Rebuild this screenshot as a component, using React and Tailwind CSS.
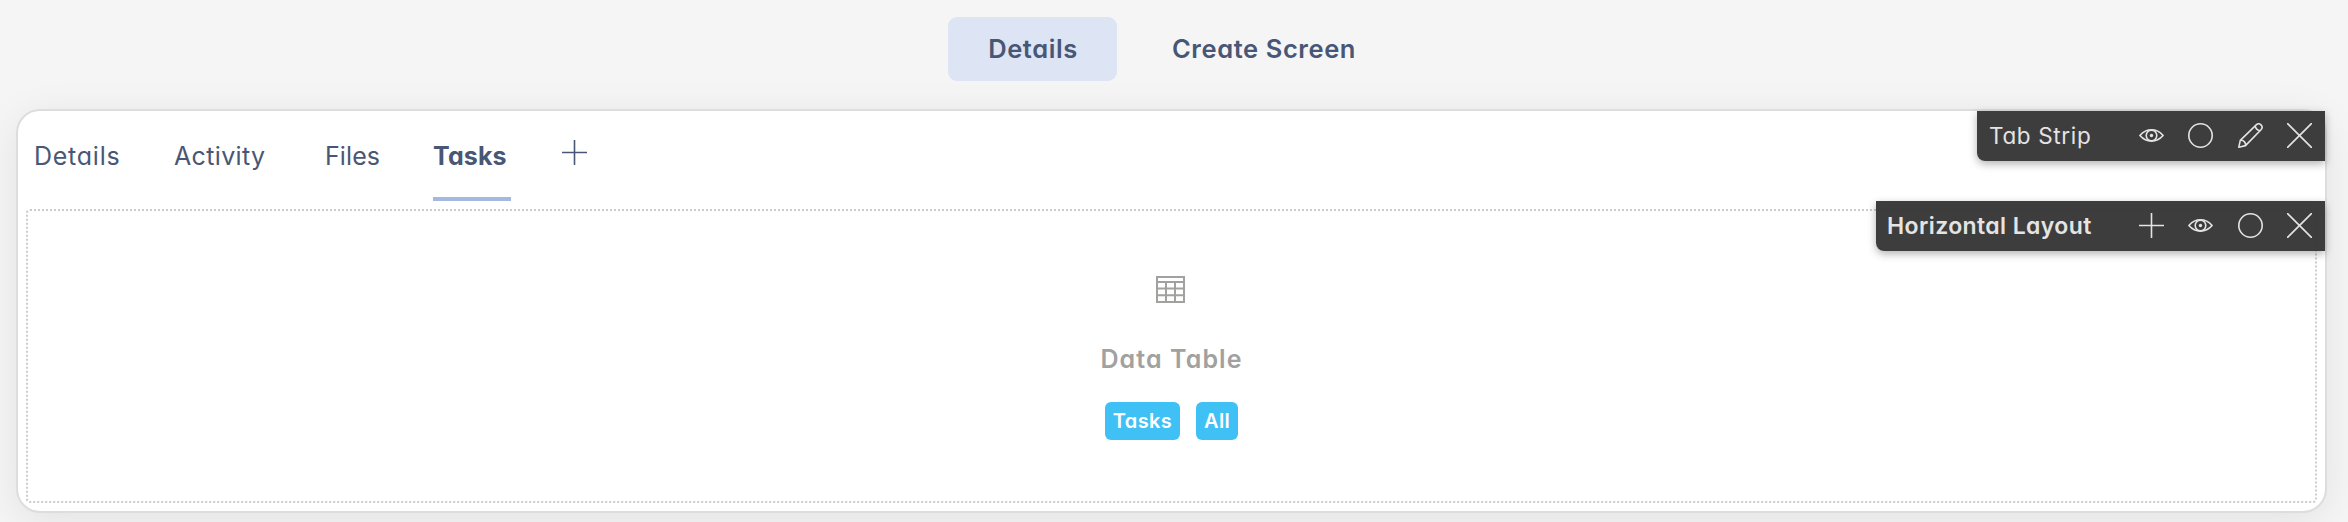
function Icon({ children }) {
  return (
    <svg viewBox="0 0 25 25" className="size-[25px] shrink-0" fill="none" stroke="currentColor" strokeWidth="1.6" strokeLinecap="round" strokeLinejoin="round">
      {children}
    </svg>
  );
}

const Plus = () => (
  <Icon>
    <path d="M12.5 .5v24M.5 12.5h24" />
  </Icon>
);

const Eye = () => (
  <Icon>
    <path d="M.9 12.5C4 9 8 6.8 12.5 6.8S21 9 24.1 12.5C21 16 17 18.2 12.5 18.2S4 16 .9 12.5Z" />
    <circle cx="12.5" cy="12.5" r="5.3" />
    <circle cx="12.5" cy="12.5" r="1.7" fill="currentColor" stroke="none" />
  </Icon>
);

const Circle = () => (
  <Icon>
    <circle cx="12.5" cy="12.5" r="11.7" />
  </Icon>
);

const Pencil = () => (
  <Icon>
    <path d="M.8 24.2 2.3 17.4 18.2 1.9c1.5-1.4 3.4-1.4 4.8 0s1.4 3.3 0 4.8L7.5 22.6.8 24.2ZM2.3 17.4c3-.6 5.8 2.2 5.2 5.2M17.2 2.9c.4 2.6 2.2 4.4 4.8 4.8" />
  </Icon>
);

const Close = () => (
  <Icon>
    <path d="M.6 .6l23.8 23.8M24.4 .6.6 24.4" />
  </Icon>
);

const TableIcon = () => (
  <svg viewBox="0 0 29 27" className="mr-0.5 h-[27px] w-[29px]" fill="none" stroke="#a1a19f" strokeWidth="2">
    <path d="M1 1h27v25H1ZM1 6h27M1 12.5h27M1 19.2h27M10 6V26M19 6V26" />
  </svg>
);

export default function App() {
  return (
    <div className="h-[522px] overflow-hidden bg-[#f5f5f5] px-4 pt-[17px] font-['Inter',sans-serif] text-[#485775] [font-feature-settings:'cv11']">
      <nav className="flex justify-center gap-[15px] pr-[5px] text-[25.5px] font-semibold tracking-[0.6px]">
        <button className="h-16 w-[169px] rounded-[9px] bg-[#dde4f4] pl-px">Details</button>
        <button className="h-16 w-[263px] rounded-[9px] pl-px">Create Screen</button>
      </nav>

      <main className="relative mt-7 mr-[5px] h-[404px] rounded-3xl border-2 border-[#dddddd] bg-white px-2 shadow-[0_8px_40px_rgba(0,0,0,0.08)]">
        <div className="flex h-[90px] pl-2 text-[25px]">
          <div className="flex w-[140px] items-center pt-0.5 tracking-[0.75px]">Details</div>
          <div className="flex w-[151px] items-center pt-0.5 tracking-[0.35px]">Activity</div>
          <div className="flex w-[108px] items-center pt-0.5 tracking-[0.1px]">Files</div>
          <div className="flex w-[78px] items-center border-b-4 border-[#a5b9e0] pt-1.5 font-bold tracking-[0.15px]">Tasks</div>
          <div className="ml-[51px] flex items-center pb-[7px]">
            <Plus />
          </div>
        </div>

        <section className="mt-2 flex h-[294px] flex-col items-center rounded border-2 border-dotted border-[#cccccc] pt-[65px]">
          <TableIcon />
          <h2 className="mt-[38px] h-9 text-[25px] leading-9 font-semibold tracking-[1.1px] text-[#a1a19f]">Data Table</h2>
          <div className="mt-[25px] flex gap-4 text-xl font-semibold text-white">
            <span className="flex h-[38px] w-[75px] items-center justify-center rounded-md bg-[#40c1f5] tracking-[0.4px]">Tasks</span>
            <span className="flex h-[38px] w-[42px] items-center justify-center rounded-md bg-[#40c1f5] tracking-[0.3px]">All</span>
          </div>
        </section>

        <div className="absolute top-0 right-0 flex h-[50px] w-[348px] items-center justify-between rounded-bl-lg bg-[#353535]/96 pr-[13px] pl-3 text-[22.5px] tracking-[0.65px] text-[#e4e4e4] shadow-[0_3px_8px_rgba(0,0,0,0.3)]">
          Tab Strip
          <div className="flex gap-[24.5px] pb-px">
            <Eye />
            <Circle />
            <Pencil />
            <Close />
          </div>
        </div>

        <div className="absolute top-[90px] right-0 flex h-[50px] w-[449px] items-center justify-between rounded-bl-lg bg-[#353535]/96 pr-[13px] pl-[11px] text-[23px] font-semibold tracking-[0.4px] text-[#e4e4e4] shadow-[0_3px_8px_rgba(0,0,0,0.3)]">
          Horizontal Layout
          <div className="flex gap-[24.5px] pb-px">
            <Plus />
            <Eye />
            <Circle />
            <Close />
          </div>
        </div>
      </main>
    </div>
  );
}
